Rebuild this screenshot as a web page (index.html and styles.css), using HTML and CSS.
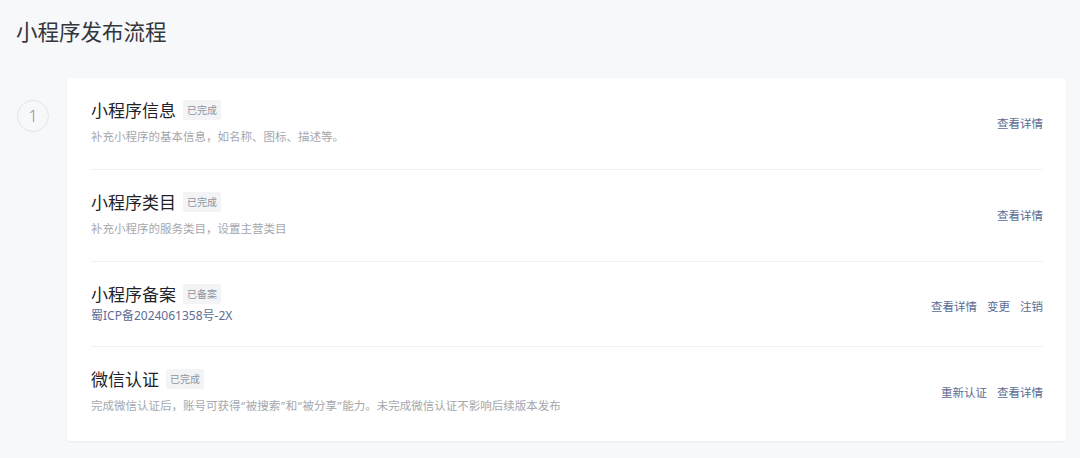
FILE: index.html
```html
<!DOCTYPE html>
<html lang="zh-CN">
<head>
<meta charset="utf-8">
<title>小程序发布流程</title>
<link rel="stylesheet" href="styles.css">
</head>
<body>
<div class="page">
  <h1 class="page-title">小程序发布流程</h1>
  <div class="step">
    <div class="step-num">1</div>
    <div class="card">
      <div class="row">
        <div class="row-main">
          <div class="row-head"><span class="row-title">小程序信息</span><span class="tag">已完成</span></div>
          <div class="row-desc">补充小程序的基本信息，如名称、图标、描述等。</div>
        </div>
        <div class="actions"><a class="link">查看详情</a></div>
      </div>
      <div class="row">
        <div class="row-main">
          <div class="row-head"><span class="row-title">小程序类目</span><span class="tag">已完成</span></div>
          <div class="row-desc">补充小程序的服务类目，设置主营类目</div>
        </div>
        <div class="actions"><a class="link">查看详情</a></div>
      </div>
      <div class="row row-icp">
        <div class="row-main">
          <div class="row-head"><span class="row-title">小程序备案</span><span class="tag">已备案</span></div>
          <div class="row-icp-no">蜀ICP备2024061358号-2X</div>
        </div>
        <div class="actions"><a class="link">查看详情</a><a class="link">变更</a><a class="link">注销</a></div>
      </div>
      <div class="row">
        <div class="row-main">
          <div class="row-head"><span class="row-title">微信认证</span><span class="tag">已完成</span></div>
          <div class="row-desc">完成微信认证后，账号可获得<span class="q">“</span>被搜索<span class="q">”</span>和<span class="q">“</span>被分享<span class="q">”</span>能力。未完成微信认证不影响后续版本发布</div>
        </div>
        <div class="actions"><a class="link">重新认证</a><a class="link">查看详情</a></div>
      </div>
    </div>
  </div>
</div>
</body>
</html>
```

FILE: styles.css
```css
* { box-sizing: border-box; }
html, body { margin: 0; padding: 0; }
body {
  background: #f7f8fa;
  font-family: "Noto Sans CJK SC", "Noto Sans", sans-serif;
  color: #1f2329;
  width: 1080px;
  height: 458px;
  overflow: hidden;
}
.page {
  padding: 19px 14px 0 16px;
}
.page-title {
  margin: 0;
  font-size: 21.5px;
  line-height: 24px;
  font-weight: 400;
  color: #33363b;
}
.step {
  display: flex;
  align-items: flex-start;
  margin-top: 35px;
}
.step-num {
  width: 32px;
  height: 32px;
  margin: 22px 0 0 1px;
  border: 1px solid #e3e5e9;
  border-radius: 50%;
  display: flex;
  align-items: center;
  justify-content: center;
  font-family: "Noto Sans", "Open Sans", sans-serif;
  font-weight: 300;
  font-size: 16px;
  color: #8a8f99;
  flex: none;
  background: #f7f8fa;
}
.card {
  flex: 1;
  margin-left: 18px;
  background: #fff;
  border-radius: 4px;
  box-shadow: 0 1px 2px rgba(0, 0, 0, 0.06);
  padding: 0 23px 0 24px;
}
.row {
  display: flex;
  align-items: center;
  justify-content: space-between;
  padding: 21px 0 23px;
  border-bottom: 1px solid #f0f1f3;
}
.row:last-child { border-bottom: none; padding-bottom: 25px; }
.row-head {
  display: flex;
  align-items: center;
  height: 22px;
}
.row-title {
  font-size: 17px;
  line-height: 22px;
  color: #1f2329;
}
.tag {
  margin-left: 7px;
  height: 20px;
  line-height: 20px;
  padding: 0 4px;
  font-size: 10px;
  color: #8f959e;
  background: #f3f4f6;
  border-radius: 2px;
}
.row-desc {
  margin-top: 5px;
  font-size: 11.5px;
  line-height: 20px;
  color: #a4a7ad;
}
.q {
  font-family: "Noto Sans", sans-serif;
  padding: 0 0.6px;
}
.row-icp-no {
  margin-top: 4px;
  font-family: "Noto Sans", "Noto Sans CJK SC", sans-serif;
  font-size: 12px;
  line-height: 14px;
  color: #5d6d96;
}
.row-icp .actions { margin-top: 5px; }
.actions {
  display: flex;
  gap: 10px;
  flex: none;
}
.link {
  font-size: 11.5px;
  line-height: 16px;
  color: #5a6b93;
  cursor: pointer;
}
```
